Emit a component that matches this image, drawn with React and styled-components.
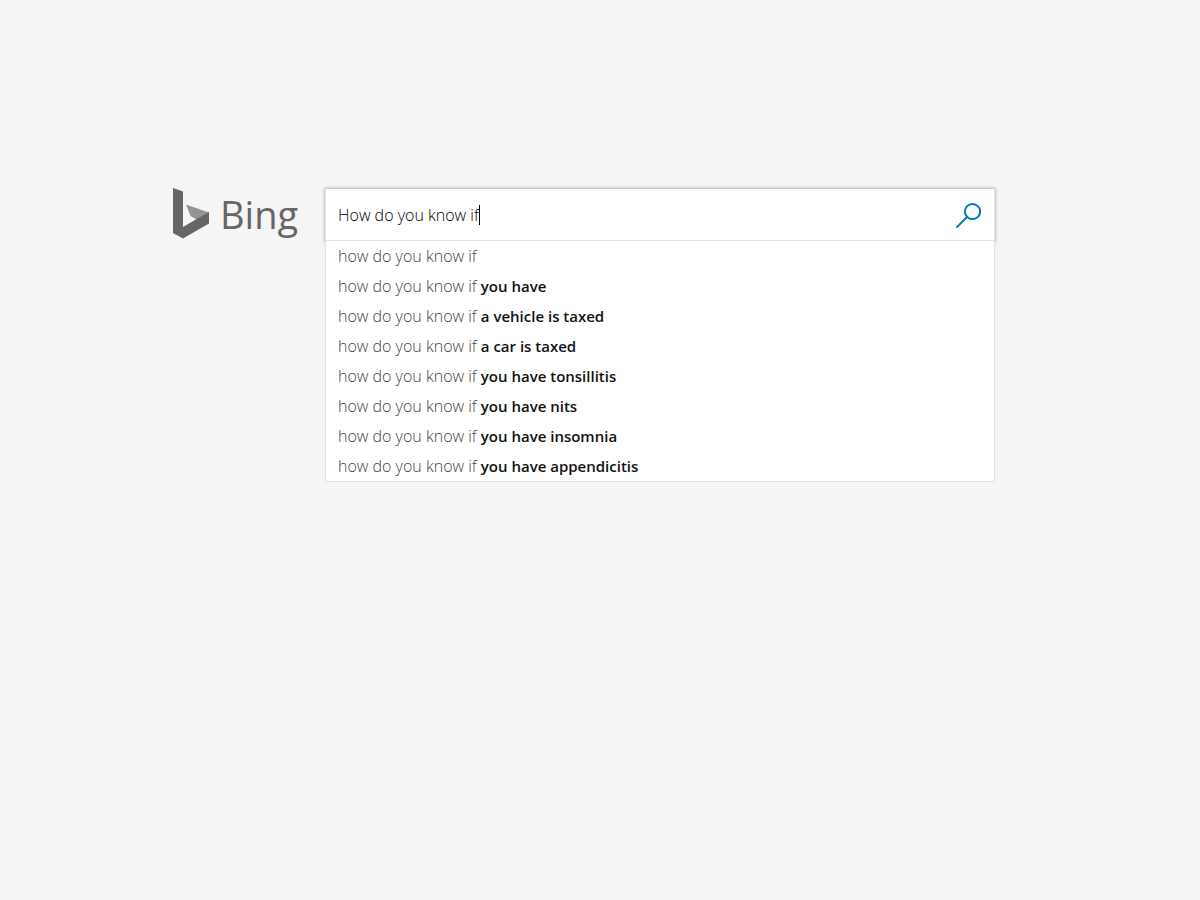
import { useEffect, useRef, useState } from "react";
import styled, { createGlobalStyle, keyframes } from "styled-components";

const GlobalStyle = createGlobalStyle`
  *, *::before, *::after { box-sizing: border-box; }
  body {
    margin: 0;
    background: #f5f5f5;
    color: #000;
    font-family: "Segoe UI", "Open Sans", "Noto Sans", sans-serif;
    font-size: 16px;
    font-weight: 300;
  }
`;

const Page = styled.main`
  display: flex;
  align-items: flex-start;
  min-height: 100vh;
  padding: 188px 24px 48px 173px;
`;

const Logo = styled.a`
  display: flex;
  flex: none;
  gap: 11px;
  width: 152px;
  height: 52px;
  color: #666;
  text-decoration: none;
`;

const Mark = styled.svg`
  flex: none;
  width: 36px;
  height: 51px;
`;

const Wordmark = styled.span`
  font-size: 38px;
  line-height: 52px;
  font-weight: 400;
`;

const Search = styled.form`
  flex: 1;
  min-width: 0;
  max-width: 670px;
`;

const Field = styled.div`
  display: flex;
  align-items: center;
  height: 53px;
  border: 1px solid #e2e2e2;
  border-top-color: #c8c8c8;
  background: #fff;
  box-shadow: 0 1px 3px 1px rgba(0, 0, 0, 0.2);
`;

const QueryLabel = styled.label`
  display: flex;
  flex: 1;
  align-items: center;
  min-width: 0;
  height: 100%;
  padding-left: 12px;
  cursor: text;
`;

const QueryInput = styled.input`
  field-sizing: content;
  max-width: 100%;
  height: 100%;
  padding: 0;
  border: 0;
  outline: 0;
  background: transparent;
  color: #000;
  caret-color: transparent;
  font: inherit;
`;

const blink = keyframes`
  0%, 90% { opacity: 1; }
  91%, 100% { opacity: 0; }
`;

const Caret = styled.span`
  flex: none;
  width: 1px;
  height: 20px;
  background: #000;
  animation: ${blink} 10s infinite;
`;

const SubmitButton = styled.button`
  display: flex;
  flex: none;
  align-items: center;
  justify-content: center;
  width: 53px;
  height: 100%;
  padding: 0;
  border: 0;
  background: transparent;
  color: #007daa;
  cursor: pointer;
`;

const Suggestions = styled.ul`
  position: relative;
  margin: 0;
  padding: 0;
  border: 1px solid #e2e2e2;
  border-top: 0;
  background: #fff;
  list-style: none;
`;

const Suggestion = styled.li`
  padding: 0 12px;
  color: #444;
  line-height: 30px;
  cursor: pointer;
`;

const Completion = styled.strong`
  color: #111;
  font-size: 15px;
  font-weight: 600;
`;

const completions = [
  "",
  "you have",
  "a vehicle is taxed",
  "a car is taxed",
  "you have tonsillitis",
  "you have nits",
  "you have insomnia",
  "you have appendicitis",
];

export default function App() {
  const [query, setQuery] = useState("How do you know if");
  const input = useRef(null);

  useEffect(() => {
    const el = input.current;
    el.focus();
    el.setSelectionRange(el.value.length, el.value.length);
  }, []);

  return (
    <>
      <GlobalStyle />
      <Page>
        <Logo href="#">
          <Mark viewBox="0 0 36 51" aria-hidden="true">
            <path fill="#949494" d="M13 16.5 36 24.5 24.5 32 17.5 28z" />
            <path fill="#666" d="M0 0 10 3.6V39L24.5 30.5 36 24v11.5L10 50.5 0 45z" />
          </Mark>
          <Wordmark>Bing</Wordmark>
        </Logo>
        <Search role="search" onSubmit={(e) => e.preventDefault()}>
          <Field>
            <QueryLabel>
              <QueryInput
                ref={input}
                type="text"
                aria-label="Enter your search term"
                autoComplete="off"
                value={query}
                onChange={(e) => setQuery(e.target.value)}
              />
              <Caret aria-hidden="true" />
            </QueryLabel>
            <SubmitButton type="submit" aria-label="Search">
              <svg width="27" height="27" viewBox="0 0 27 27" fill="none" stroke="currentColor" strokeWidth="2">
                <circle cx="18.5" cy="10.5" r="7.6" />
                <path d="M13 16 2.4 26.6" />
              </svg>
            </SubmitButton>
          </Field>
          <Suggestions>
            {completions.map((text) => (
              <Suggestion key={text}>
                how do you know if {text && <Completion>{text}</Completion>}
              </Suggestion>
            ))}
          </Suggestions>
        </Search>
      </Page>
    </>
  );
}
